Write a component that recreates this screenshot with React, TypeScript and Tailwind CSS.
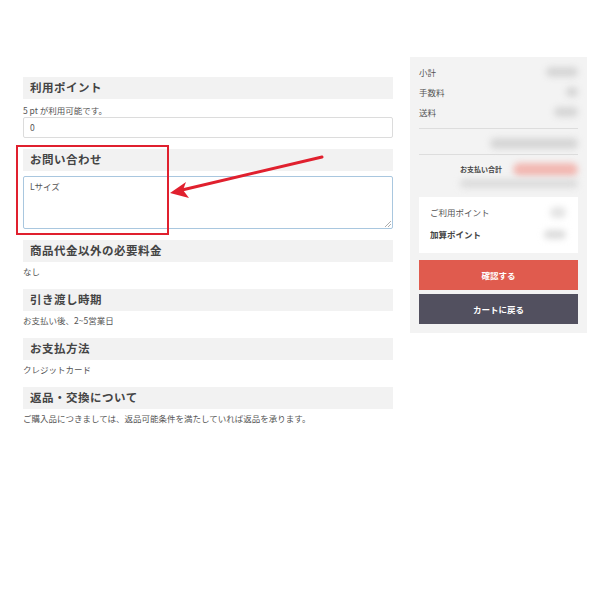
import React from 'react';

const font = { fontFamily: '"Noto Sans CJK JP", "Noto Sans", sans-serif' };

// blurred placeholder used for hidden amounts
const Blur = ({ w, h = 8, color = 'bg-[#d6d6d6]' }: { w: number; h?: number; color?: string }) => (
  <div className={`${color} rounded-full blur-[3px]`} style={{ width: w, height: h }} />
);

const SectionHeader = ({ title }: { title: string }) => (
  <div className="h-[22px] bg-[#f2f2f2] px-[7px] flex items-center text-[11.5px] font-bold text-[#444] tracking-[0.5px]">
    {title}
  </div>
);

const InfoSection = ({ title, body }: { title: string; body: string }) => (
  <div className="mb-[13px]">
    <SectionHeader title={title} />
    <p className="mt-[4px] text-[8.5px] leading-[10px] text-[#555]">{body}</p>
  </div>
);

export default function App() {
  return (
    <div className="relative w-[600px] h-[600px] bg-white overflow-hidden" style={font}>
      <div className="flex items-start pt-[57px] pl-[23px] gap-[17px]">
        {/* left column */}
        <div className="w-[370px] pt-[20px]">
          <SectionHeader title="利用ポイント" />
          <p className="mt-[5px] text-[8.5px] leading-[12px] text-[#555]">5 pt が利用可能です。</p>
          <div className="mt-[1px] h-[21px] border border-[#dcdcdc] rounded-[2px] flex items-center px-[6px] text-[8.5px] text-[#555]">
            0
          </div>

          <div className="mt-[11px]">
            <SectionHeader title="お問い合わせ" />
          </div>
          <div className="relative mt-[5px] h-[53px] border border-[#a9c7df] rounded-[2px] px-[6px] pt-[3px] text-[8.5px] text-[#555]">
            Lサイズ
            <svg className="absolute right-[1px] bottom-[1px]" width="6" height="6" viewBox="0 0 6 6">
              <path d="M6 0L0 6M6 3L3 6" stroke="#999" strokeWidth="0.8" />
            </svg>
          </div>

          <div className="mt-[11px]">
            <InfoSection title="商品代金以外の必要料金" body="なし" />
            <InfoSection title="引き渡し時期" body="お支払い後、2~5営業日" />
            <InfoSection title="お支払方法" body="クレジットカード" />
            <InfoSection title="返品・交換について" body="ご購入品につきましては、返品可能条件を満たしていれば返品を承ります。" />
          </div>
        </div>

        {/* right summary panel */}
        <div className="w-[177px] bg-[#f3f3f3] px-[9px] pt-[8px] pb-[9px] text-[#555]">
          <div className="flex items-center justify-between h-[12px] mt-[1px] text-[8.5px]">
            <span>小計</span>
            <Blur w={32} h={10} />
          </div>
          <div className="flex items-center justify-between h-[12px] mt-[8px] text-[8.5px]">
            <span>手数料</span>
            <Blur w={12} h={10} />
          </div>
          <div className="flex items-center justify-between h-[12px] mt-[8px] text-[8.5px]">
            <span>送料</span>
            <Blur w={24} h={10} />
          </div>
          <div className="mt-[10px] border-t border-[#dddddd]" />
          <div className="flex justify-end h-[12px] items-center mt-[8px]">
            <Blur w={88} h={11} />
          </div>
          <div className="mt-[5px] border-t border-[#dddddd]" />
          <div className="flex items-center h-[12px] mt-[8px]">
            <span className="ml-[41px] text-[7px] font-bold text-[#444]">お支払い合計</span>
            <div className="ml-auto">
              <Blur w={65} h={13} color="bg-[#f2b8b2]" />
            </div>
          </div>
          <div className="flex justify-end mt-[4px]">
            <Blur w={118} h={9} color="bg-[#dcdcdc]" />
          </div>

          <div className="mt-[9px] bg-white h-[56px] px-[11px] pt-[9px] text-[8.5px]">
            <div className="flex items-center justify-between h-[12px]">
              <span>ご利用ポイント</span>
              <div className="mr-[1px]"><Blur w={16} h={11} color="bg-[#e4e4e4]" /></div>
            </div>
            <div className="flex items-center justify-between h-[12px] mt-[10px] font-bold text-[#444]">
              <span>加算ポイント</span>
              <div className="mr-[1px]"><Blur w={22} h={9} color="bg-[#dcdcdc]" /></div>
            </div>
          </div>

          <button className="mt-[7px] w-full h-[30px] bg-[#e05b4e] text-white text-[8.5px] font-bold">
            確認する
          </button>
          <button className="mt-[4px] w-full h-[30px] bg-[#52505f] text-white text-[8.5px] font-bold">
            カートに戻る
          </button>
        </div>
      </div>

      {/* annotation overlay */}
      <div className="absolute left-[16px] top-[145px] w-[153px] h-[90px] border-2 border-[#e0202e]" />
      <svg className="absolute left-0 top-0 pointer-events-none" width="600" height="600">
        <line x1="322" y1="157" x2="182" y2="190" stroke="#e0202e" strokeWidth="3" strokeLinecap="round" />
        <path d="M170 193 L186 182 L183 190 L189 198 Z" fill="#e0202e" />
      </svg>
    </div>
  );
}
